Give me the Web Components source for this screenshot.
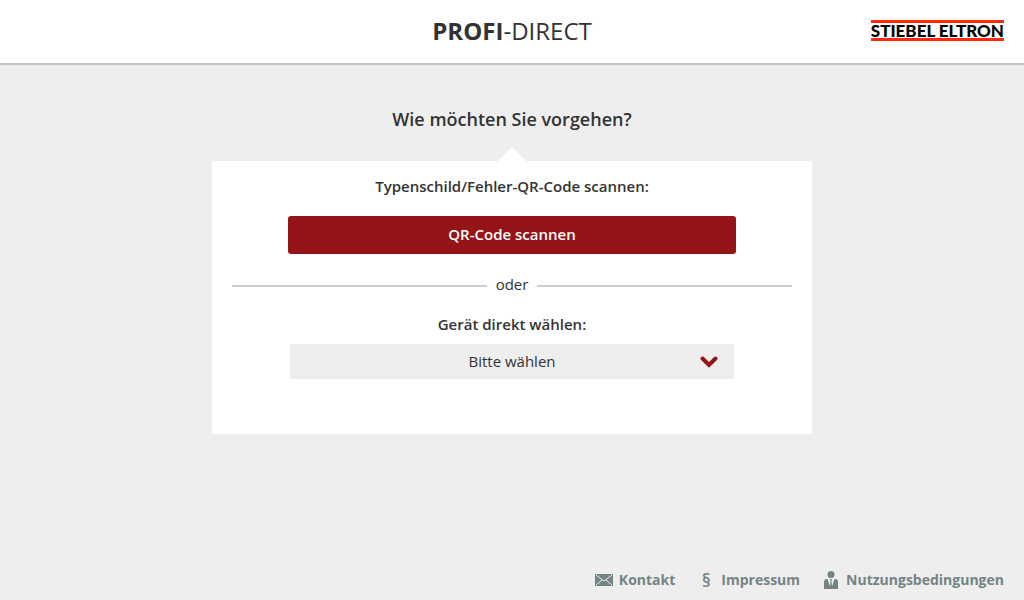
<!DOCTYPE html>
<html lang="de">
<head>
<meta charset="utf-8">
<meta name="viewport" content="width=device-width, initial-scale=1">
<title>PROFI-DIRECT</title>
<style>
  body {
    margin: 0;
    background: #eee;
    color: #333;
    font-family: "Open Sans", "Noto Sans", sans-serif;
    font-size: 15px;
  }
</style>
</head>
<body>
<profi-app>
  <profi-header slot="header"><b>PROFI</b>-DIRECT</profi-header>
  <choice-card heading="Wie möchten Sie vorgehen?">
    <scan-action label="Typenschild/Fehler-QR-Code scannen:">QR-Code scannen</scan-action>
    <or-divider>oder</or-divider>
    <device-select label="Gerät direkt wählen:" placeholder="Bitte wählen"></device-select>
  </choice-card>
  <profi-footer slot="footer">
    <footer-link icon="mail" href="#kontakt">Kontakt</footer-link>
    <footer-link icon="paragraph" href="#impressum">Impressum</footer-link>
    <footer-link icon="person" href="#nutzungsbedingungen">Nutzungsbedingungen</footer-link>
  </profi-footer>
</profi-app>

<script>
class BaseElement extends HTMLElement {
  constructor() {
    super();
    this.shadow = this.attachShadow({ mode: "open" });
  }

  connectedCallback() {
    this.shadow.innerHTML = this.html();
  }
}

class ProfiApp extends BaseElement {
  html() {
    return `
      <style>
        :host {
          display: flex;
          flex-direction: column;
          min-height: 100vh;
        }
        main {
          flex: 1;
        }
      </style>
      <slot name="header"></slot>
      <main><slot></slot></main>
      <slot name="footer"></slot>
    `;
  }
}
customElements.define("profi-app", ProfiApp);

class BrandLogo extends BaseElement {
  html() {
    return `
      <style>
        :host {
          display: block;
          border-top: 3px solid #ff2a0e;
          border-bottom: 3px solid #ff2a0e;
          color: #000;
          font: 900 17px/15px Lato, sans-serif;
          white-space: nowrap;
        }
      </style>
      STIEBEL ELTRON
    `;
  }
}
customElements.define("brand-logo", BrandLogo);

class ProfiHeader extends BaseElement {
  html() {
    return `
      <style>
        :host {
          display: block;
          background: #fff;
          border-bottom: 2px solid #c4c4c4;
        }
        header {
          display: grid;
          grid-template-columns: 1fr auto 1fr;
          align-items: center;
          padding: 0 20px 2px;
          height: 61px;
        }
        .title {
          grid-column: 2;
          font-size: 24px;
          line-height: 32px;
        }
        brand-logo {
          justify-self: end;
        }
        ::slotted(b) {
          font-weight: 700;
        }
      </style>
      <header>
        <div class="title"><slot></slot></div>
        <brand-logo></brand-logo>
      </header>
    `;
  }
}
customElements.define("profi-header", ProfiHeader);

class ChoiceCard extends BaseElement {
  html() {
    return `
      <style>
        :host {
          display: block;
          max-width: 600px;
          margin: 0 auto;
          padding-top: 40px;
        }
        h1 {
          margin: 0 0 14px;
          font-size: 18px;
          line-height: 28px;
          font-weight: 600;
          text-align: center;
        }
        .arrow {
          width: 28px;
          height: 14px;
          margin: 0 auto;
          background: #fff;
          clip-path: polygon(50% 0, 100% 100%, 0 100%);
        }
        .card {
          background: #fff;
          padding: 13px 20px 55px;
        }
      </style>
      <h1>${this.getAttribute("heading")}</h1>
      <div class="arrow"></div>
      <div class="card"><slot></slot></div>
    `;
  }
}
customElements.define("choice-card", ChoiceCard);

class ScanAction extends BaseElement {
  html() {
    return `
      <style>
        :host {
          display: block;
          text-align: center;
        }
        p {
          margin: 0 0 18px;
          line-height: 24px;
          font-weight: 600;
        }
        button {
          display: block;
          width: 80%;
          height: 38px;
          margin: 0 auto;
          padding: 0 0 2px;
          border: 0;
          border-radius: 3px;
          background: #941418;
          color: #fff;
          font: inherit;
          font-weight: 600;
          cursor: pointer;
        }
      </style>
      <p id="label">${this.getAttribute("label")}</p>
      <button type="button" aria-describedby="label"><slot></slot></button>
    `;
  }
}
customElements.define("scan-action", ScanAction);

class OrDivider extends BaseElement {
  html() {
    return `
      <style>
        :host {
          display: flex;
          align-items: center;
          gap: 9px;
          margin: 18px 0 12px;
          line-height: 24px;
        }
        :host::before,
        :host::after {
          content: "";
          flex: 1;
          height: 2px;
          background: #ccc;
        }
        span {
          padding-bottom: 4px;
        }
      </style>
      <span><slot></slot></span>
    `;
  }
}
customElements.define("or-divider", OrDivider);

class DeviceSelect extends BaseElement {
  html() {
    return `
      <style>
        :host {
          display: block;
          text-align: center;
        }
        label {
          display: block;
          margin-bottom: 8px;
          line-height: 24px;
          font-weight: 600;
        }
        .field {
          display: grid;
          align-items: center;
          margin: 0 58px;
        }
        select,
        svg {
          grid-area: 1 / 1;
        }
        select {
          appearance: none;
          width: 100%;
          height: 35px;
          padding: 0 36px 2px;
          border: 0;
          border-radius: 0;
          background: #eee;
          color: #333;
          font: inherit;
          text-align: center;
          text-align-last: center;
        }
        svg {
          justify-self: end;
          margin-right: 15px;
          pointer-events: none;
        }
      </style>
      <label for="device">${this.getAttribute("label")}</label>
      <div class="field">
        <select id="device">
          <option>${this.getAttribute("placeholder")}</option>
        </select>
        <svg width="20" height="14" viewBox="0 0 20 14" fill="none" stroke="#941418" stroke-width="4" stroke-linecap="round">
          <path d="M3.5 3.5 10 10 16.5 3.5"/>
        </svg>
      </div>
    `;
  }
}
customElements.define("device-select", DeviceSelect);

class ProfiFooter extends BaseElement {
  html() {
    return `
      <style>
        :host {
          display: block;
        }
        footer {
          display: flex;
          flex-wrap: wrap;
          justify-content: flex-end;
          gap: 8px 22px;
          padding: 8px 20px;
        }
      </style>
      <footer><slot></slot></footer>
    `;
  }
}
customElements.define("profi-footer", ProfiFooter);

const icons = {
  mail: `
    <svg width="18" height="18" viewBox="0 0 18 18">
      <path fill="#738485" d="M0 3h18v12H0z"/>
      <path fill="none" stroke="#eee" d="M1 4l8 6 8-6M1 14l6-5M17 14l-6-5"/>
    </svg>`,
  paragraph: `<span class="sign">§</span>`,
  person: `
    <svg width="18" height="18" viewBox="0 0 18 18" fill="#738485">
      <circle cx="9" cy="3.5" r="3.5"/>
      <path d="M2 18v-7q0-3 3-3h.5L8 15.5 8.5 10 8 8h2l-.5 2 .5 5.5L12.5 8h.5q3 0 3 3v7z"/>
    </svg>`
};

class FooterLink extends BaseElement {
  html() {
    return `
      <style>
        :host {
          display: block;
        }
        a {
          display: flex;
          align-items: center;
          gap: 6px;
          color: #738485;
          font-size: 14px;
          line-height: 24px;
          font-weight: 700;
          text-decoration: none;
        }
        .icon {
          display: flex;
          justify-content: center;
          width: 18px;
        }
        .sign {
          font-size: 18px;
          font-weight: 600;
        }
      </style>
      <a href="${this.getAttribute("href")}">
        <span class="icon">${icons[this.getAttribute("icon")]}</span>
        <slot></slot>
      </a>
    `;
  }
}
customElements.define("footer-link", FooterLink);
</script>
</body>
</html>
